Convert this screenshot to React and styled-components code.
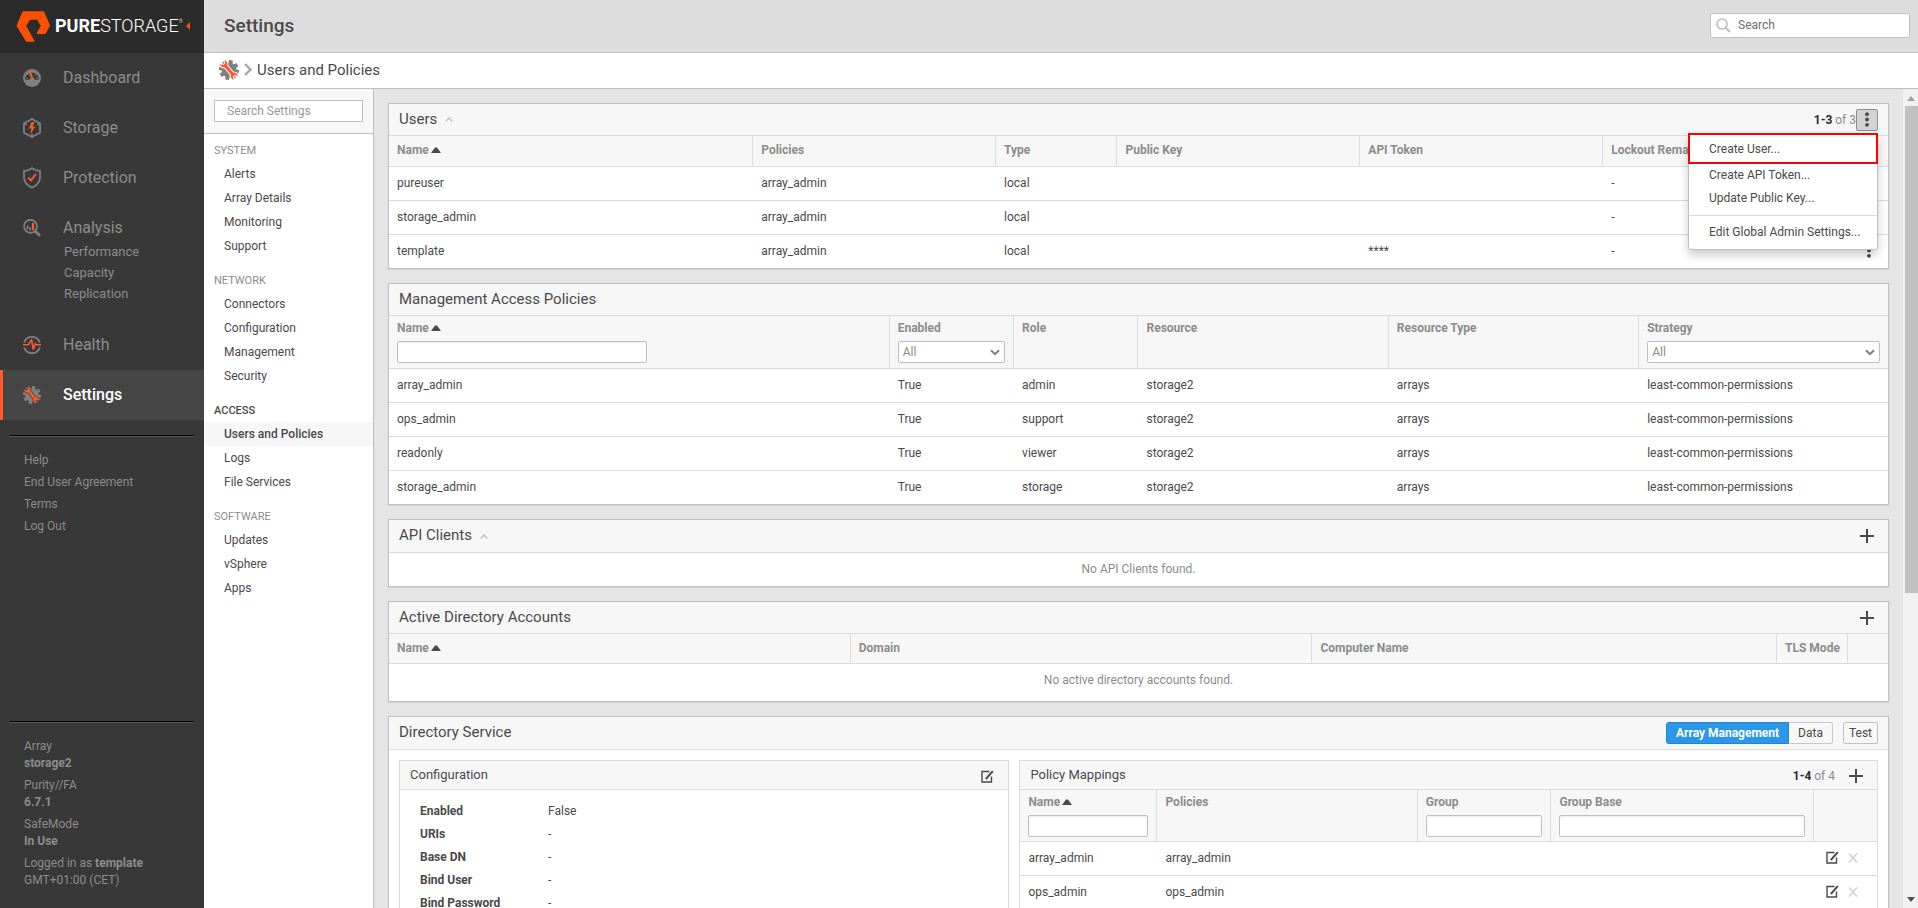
import React, { useState } from "react";
import styled, { createGlobalStyle } from "styled-components";

const GlobalStyle = createGlobalStyle`
* { box-sizing: border-box; }
body {
  margin: 0;
  font-family: Roboto, "Liberation Sans", sans-serif;
  font-size: 12px;
  line-height: 16px;
  color: #4a4a4a;
  background: #e5e5e5;
}
button, input, select { font: inherit; color: inherit; }
a { color: inherit; text-decoration: none; }
h1, h2, h3, ul, dl, dd, p { margin: 0; padding: 0; font-weight: 400; }
ul { list-style: none; }
`;

const Page = styled.div`
display: flex;
height: 100vh;
overflow: hidden;
`;

/* left menu */
const Sidebar = styled.aside`
display: flex;
flex-direction: column;
flex: 0 0 204px;
background: #383838;
color: #8c8c8c;
`;
const LogoBar = styled.div`
display: flex;
align-items: center;
height: 53px;
padding: 0 14px 2px 16px;
background: #2b2b2b;
color: #fff;
`;
const LogoText = styled.a`
flex: 1;
display: flex;
align-items: flex-start;
margin-left: 4px;
font-size: 18px;
font-weight: 300;
line-height: 22px;
strong { font-weight: 700; }
sup { font-size: 5px; line-height: 12px; }
`;
const CollapseButton = styled.button`
display: flex;
padding: 0;
border: 0;
background: none;
`;
const MainLink = styled.a`
display: flex;
align-items: center;
height: 50px;
padding-left: ${props => (props.$active ? "20px" : "23px")};
gap: 22px;
border-left: ${props => (props.$active ? "3px solid #ff5a28" : "0")};
background: ${props => (props.$active ? "#454545" : "none")};
color: ${props => (props.$active ? "#fff" : "inherit")};
font-weight: ${props => (props.$active ? 500 : 400)};
font-size: 16px;
`;
const SubLinks = styled.ul`
padding: 0 0 16px 64px;
margin-top: -12px;
font-size: 13px;
line-height: 21px;
`;
const Rule = styled.hr`
width: 184px;
height: 2px;
margin: ${props => (props.$bottom ? "auto" : "15px")} 10px 0;
border: 0;
border-top: 1px solid #000;
background: #565656;
`;
const HelpLinks = styled.ul`
padding: 12px 24px;
line-height: 22px;
`;
const ArrayInfo = styled.dl`
padding: 15px 24px 14px;
line-height: 17px;
div { margin-bottom: 5px; }
dd, strong { font-weight: 700; }
dd.plain { font-weight: 400; }
`;

/* right hand side */
const Content = styled.div`
display: flex;
flex-direction: column;
flex: 1;
min-width: 0;
`;
const TopBar = styled.header`
display: flex;
align-items: center;
justify-content: space-between;
flex: 0 0 53px;
padding: 0 8px 2px 20px;
border-bottom: 1px solid #c0c0c0;
background: #ddd;
h1 { margin-top: 2px; font-size: 19px; line-height: 24px; font-weight: 500; }
`;
const SearchBox = styled.label`
display: flex;
align-items: center;
gap: 7px;
width: 200px;
height: 25px;
padding: 0 5px;
border: 1px solid #c0c0c0;
border-radius: 2px;
background: #fff;
input {
  flex: 1;
  min-width: 0;
  padding: 0;
  border: 0;
  outline: 0;
}
input::placeholder { color: #6e6e6e; opacity: 1; }
`;
const Breadcrumb = styled.nav`
display: flex;
align-items: center;
flex: 0 0 36px;
padding: 0 15px 2px;
gap: 5px;
border-bottom: 1px solid #c0c0c0;
background: #fff;
h2 { font-size: 15px; line-height: 20px; }
`;
const Body = styled.div`
display: flex;
flex: 1;
min-height: 0;
`;

const SettingsNav = styled.nav`
flex: 0 0 170px;
border-right: 1px solid #c0c0c0;
background: #fff;
`;
const NavSearch = styled.div`
height: 45px;
padding: 11px 10px;
border-bottom: 1px solid #c0c0c0;
background: #f7f7f7;
input {
  display: block;
  width: 149px;
  height: 22px;
  padding: 0 12px;
  border: 1px solid #c0c0c0;
  outline: 0;
}
input::placeholder { color: #999; opacity: 1; }
`;
const NavGroup = styled.section`
padding-top: 5px;
margin-bottom: 6px;
h3 {
  padding-left: 10px;
  font-size: 11px;
  line-height: 23px;
  color: ${props => (props.$active ? "#4a4a4a" : "#8c8c8c")};
  font-weight: ${props => (props.$active ? 500 : 400)};
}
`;
const NavLink = styled.a`
display: block;
padding-left: 20px;
line-height: 24px;
background: ${props => (props.$active ? "#f7f7f7" : "none")};
font-weight: ${props => (props.$active ? 500 : 400)};
`;

const Main = styled.main`
display: flex;
flex-direction: column;
gap: 14px;
flex: 1;
min-width: 0;
padding: 14px 14px 0 14px;
overflow: hidden;
`;
const Panel = styled.section`
flex: none;
border: 1px solid #c0c0c0;
box-shadow: 0 1px 1px #d4d4d4;
background: #fff;
`;
const PanelHead = styled.div`
position: relative;
display: flex;
align-items: center;
height: ${props => (props.$tall ? "33px" : "32px")};
padding: 0 10px;
border-bottom: 1px solid #dcdcdc;
background: #f7f7f7;
h2 { font-size: 15px; line-height: 20px; margin: 0 8px 2px 0; }
`;
const Spacer = styled.div`
flex: 1;
`;
const Gap = styled.div`
width: 10px;
`;
const Count = styled.span`
color: #8c8c8c;
strong { color: #2b2b2b; }
`;
const IconButton = styled.button`
display: flex;
align-items: center;
justify-content: center;
width: 22px;
height: 22px;
padding: 0;
border: 1px solid ${props => (props.$open ? "#8c8c8c" : "transparent")};
border-radius: 2px;
background: ${props => (props.$open ? "#d3d3d3" : "none")};
`;
const Empty = styled.p`
height: ${props => (props.$tall ? "37px" : "33px")};
line-height: 33px;
text-align: center;
color: #8c8c8c;
`;

const Table = styled.table`
width: 100%;
table-layout: fixed;
border-collapse: separate;
border-spacing: 0;
th {
  height: ${props => props.$head || 31}px;
  padding: ${props => (props.$head > 40 ? "4px 8px 0" : "0 8px 2px")};
  border-right: 1px solid #dcdcdc;
  border-bottom: 1px solid #dcdcdc;
  background: #f7f7f7;
  color: #8c8c8c;
  text-align: left;
  vertical-align: ${props => (props.$head > 40 ? "top" : "middle")};
  font-weight: 700;
  white-space: nowrap;
}
th:last-child { border-right: 0; }
td {
  height: 34px;
  padding: 0 8px 2px;
  border-bottom: 1px solid #dcdcdc;
}
tbody tr:last-child td { height: 33px; border-bottom: 0; }
`;
const RowActions = styled.div`
display: flex;
justify-content: flex-end;
padding-right: ${props => (props.$inset ? "5px" : "0")};
`;
const FilterInput = styled.input`
display: block;
width: 100%;
max-width: 250px;
height: 22px;
margin-top: 5px;
padding: 0 5px;
border: 1px solid #c0c0c0;
border-radius: 2px;
box-shadow: inset 0 1px 1px #eee;
background: #fff;
`;
const SelectWrap = styled.div`
position: relative;
margin-top: 5px;
select {
  display: block;
  width: 100%;
  height: 22px;
  padding: 0 4px;
  border: 1px solid #c0c0c0;
  border-radius: 2px;
  appearance: none;
  background: #fff;
  color: #8c8c8c;
  font-weight: 400;
}
svg {
  position: absolute;
  right: 5px;
  top: 8px;
  pointer-events: none;
}
`;
const SortLabel = styled.span`
display: inline-flex;
align-items: center;
gap: 2px;
`;

const Menu = styled.div`
position: absolute;
z-index: 2;
top: 29px;
right: 10px;
width: 190px;
padding-bottom: 5px;
border: 1px solid #c0c0c0;
border-radius: 3px;
background: #fff;
box-shadow: 0 5px 10px rgba(0, 0, 0, 0.2);
hr {
  margin: 5px 0;
  border: 0;
  border-top: 1px solid #dcdcdc;
}
`;
const MenuItem = styled.button`
display: block;
width: 100%;
padding: 0 0 0 20px;
border: 0;
background: none;
line-height: 23px;
text-align: left;
white-space: nowrap;
`;
/* outlined first entry, drawn over the menu border */
const MarkedItem = styled(MenuItem)`
width: auto;
min-width: 190px;
margin: -1px -1px 0;
padding: 2px 0 0 19px;
border: 2px solid #f00;
line-height: 25px;
`;

const TabButton = styled.button`
height: 22px;
padding: 0 9px;
border: 1px solid ${props => (props.$active ? "#1f86d1" : "#c8c8c8")};
border-left-width: ${props => (props.$second ? 0 : "1px")};
border-radius: ${props => (props.$second ? "0 3px 3px 0" : "3px 0 0 3px")};
background: ${props => (props.$active ? "#2c97e8" : "#f7f7f7")};
color: ${props => (props.$active ? "#fff" : "#4a4a4a")};
font-weight: ${props => (props.$active ? 700 : 400)};
line-height: 18px;
`;
const TestButton = styled.button`
height: 22px;
margin-left: 10px;
padding: 0 5px;
border: 1px solid #c0c0c0;
border-radius: 2px;
background: #f7f7f7;
line-height: 18px;
`;
const Cards = styled.div`
display: grid;
grid-template-columns: 610fr 858fr;
gap: 10px;
align-items: start;
padding: 10px;
`;
const Card = styled.section`
border: 1px solid #dcdcdc;
min-width: 0;
`;
const CardHead = styled.div`
display: flex;
align-items: center;
height: 29px;
padding: 2px 10px 0;
border-bottom: 1px solid #dcdcdc;
background: #f7f7f7;
h3 { margin-bottom: 2px; font-size: 13px; line-height: 18px; }
`;
const ConfigList = styled.dl`
display: grid;
grid-template-columns: 128px 1fr;
padding: 10px 20px;
line-height: 23px;
dt { font-weight: 700; }
`;

const ScrollTrack = styled.div`
display: flex;
flex-direction: column;
justify-content: space-between;
flex: 0 0 15px;
padding: 7px 0 6px 2px;
background: #f1f1f1;
svg { margin-left: 2px; }
`;
const ScrollSpace = styled.div`
flex: 1;
padding: 5px 0;
`;
const ScrollThumb = styled.div`
height: 62%;
background: #c1c1c1;
`;

/* icons */
const GearIcon = ({ size = 18, bg }) => (
  <svg width={size} height={size} viewBox="0 0 20 20" aria-hidden="true">
    <g fill="#808080">
      <circle cx="10" cy="10" r="7.4" />
      {[0, 45, 90, 135, 180, 225, 270, 315].map(a => (
        <rect key={a} x="8" y="0" width="4" height="4" transform={`rotate(${a + 12} 10 10)`} />
      ))}
    </g>
    <path
      transform="translate(10 10) rotate(50)"
      d="M-10.500-3Q-7-4.600-4.600-1.500H4.600Q7-4.600 10.500-3L7.600-1.200V1.200L10.500 3Q7 4.600 4.600 1.500H-4.600Q-7 4.600-10.500 3L-7.600 1.200V-1.200Z"
      fill="#ff5a28"
      stroke={bg}
      strokeWidth="2"
      paintOrder="stroke"
    />
  </svg>
);

const DashboardIcon = () => (
  <svg width="18" height="18" viewBox="0 0 18 18" aria-hidden="true">
    <circle cx="9" cy="9" r="9" fill="#808080" />
    <path d="M2 10.500A7 7 0 1 1 16 10.500L12 11A3.200 3.200 0 0 0 6 11Z" fill="#383838" />
    <path d="M3 9l2 .5M4.500 5l1.500 1.500M9 2.600v1.800M13.500 5L12 6.500M15 9l-2 .5" stroke="#808080" strokeWidth="1" />
    <path d="M5.600 2.800L7.600 2.400 10.800 10 8.600 10.800Z" fill="#ff5a28" />
  </svg>
);

const StorageIcon = () => (
  <svg width="18" height="20" viewBox="0 0 18 20" fill="none" aria-hidden="true">
    <path d="M9 1L17 5.200V14.800L9 19 1 14.800V5.200Z" stroke="#808080" strokeWidth="1.700" />
    <path d="M1 5.200L4 6.800M17 5.200L14 6.800M9 19V15.400" stroke="#808080" strokeWidth="1.500" />
    <path d="M8.400 4L6 10.600H8.400L7.500 16 12.200 8.800H9.600L11.600 4Z" fill="#ff5a28" />
  </svg>
);

const ProtectionIcon = () => (
  <svg width="18" height="22" viewBox="0 0 18 22" fill="none" aria-hidden="true">
    <path d="M9 1.200C7 2.900 4 3.800 1 3.800V10.500C1 15 4.500 18.500 9 20.700 13.500 18.500 17 15 17 10.500V3.800C14 3.800 11 2.900 9 1.200Z" stroke="#808080" strokeWidth="1.700" />
    <path d="M5.200 10.800L8 13.400 13 7" stroke="#ff5a28" strokeWidth="1.900" />
  </svg>
);

const AnalysisIcon = () => (
  <svg width="18" height="18" viewBox="0 0 18 18" fill="none" aria-hidden="true">
    <circle cx="7.500" cy="7.300" r="6.500" stroke="#808080" strokeWidth="1.700" />
    <path d="M12 12L17 16.800" stroke="#808080" strokeWidth="2.800" />
    <path d="M4.500 6.500V10.500M7 8V11.200" stroke="#808080" strokeWidth="1.600" />
    <path d="M10 3.800V11" stroke="#ff5a28" strokeWidth="2.200" />
  </svg>
);

const HealthIcon = () => (
  <svg width="18" height="18" viewBox="0 0 18 18" fill="none" aria-hidden="true">
    <path d="M1.200 6.500A8.200 8.200 0 0 1 16.800 6.500M1.200 11.500A8.200 8.200 0 0 0 16.800 11.500" stroke="#808080" strokeWidth="1.900" />
    <path d="M0 8.800H5.600L6.800 6 8.600 4 10.300 13.600 12.200 7.800 13.200 8.800H18" stroke="#ff5a28" strokeWidth="1.600" />
  </svg>
);

const LogoIcon = () => (
  <svg width="35" height="32" viewBox="16 10 35 32" aria-hidden="true">
    <path
      d="M23 12H43.500L49.300 25.500 45 33.200H37.500L41.500 26 37.500 19H29.500L25.500 26 33.800 41H26.500L17.300 26Z"
      fill="#ff5000"
      stroke="#ff5000"
      strokeWidth="1.400"
      strokeLinejoin="round"
    />
  </svg>
);

const Plus = () => (
  <svg width="14" height="14" viewBox="0 0 14 14" aria-hidden="true">
    <path d="M7 0V14M0 7H14" stroke="#4a4a4a" strokeWidth="2" />
  </svg>
);

const Dots = () => (
  <svg width="4" height="15" viewBox="0 0 4 15" fill="#4a4a4a" aria-hidden="true">
    <circle cx="2" cy="2.200" r="1.900" />
    <circle cx="2" cy="7.500" r="1.900" />
    <circle cx="2" cy="12.800" r="1.900" />
  </svg>
);

const Edit = () => (
  <svg width="13" height="13" viewBox="0 0 13 13" fill="none" stroke="#4a4a4a" aria-hidden="true">
    <path d="M8.500 1.500H1V12H10.500V6.500" strokeWidth="1.400" />
    <path d="M4.800 9L11.800 1.200" strokeWidth="1.900" />
  </svg>
);

const Cross = () => (
  <svg width="10" height="10" viewBox="0 0 10 10" aria-hidden="true">
    <path d="M1 .5L9 9.500M9 .5L1 9.500" stroke="#d0d0d0" strokeWidth="1.400" />
  </svg>
);

const Caret = () => (
  <svg width="8" height="5" viewBox="0 0 8 5" fill="none" aria-hidden="true">
    <path d="M.7 4.500L4 1 7.300 4.500" stroke="#c0c0c0" strokeWidth="1.300" />
  </svg>
);

const SortUp = () => (
  <svg width="10" height="6" viewBox="0 0 10 6" aria-hidden="true">
    <path d="M0 6L4 .5H6L10 6Z" fill="#4a4a4a" />
  </svg>
);

const SelectArrow = () => (
  <svg width="10" height="7" viewBox="0 0 10 7" fill="none" aria-hidden="true">
    <path d="M1 1.200L5 5.200 9 1.200" stroke="#808080" strokeWidth="2" />
  </svg>
);

const ScrollArrow = ({ down }) => (
  <svg width="8" height="5" viewBox="0 0 8 5" aria-hidden="true">
    <path d={down ? "M0 0H8L4 5Z" : "M0 5H8L4 0Z"} fill={down ? "#505050" : "#a3a3a3"} />
  </svg>
);

const mainLinks = [
  { name: "Dashboard", icon: <DashboardIcon /> },
  { name: "Storage", icon: <StorageIcon /> },
  { name: "Protection", icon: <ProtectionIcon /> },
  { name: "Analysis", icon: <AnalysisIcon />, sub: ["Performance", "Capacity", "Replication"] },
  { name: "Health", icon: <HealthIcon /> },
  { name: "Settings", icon: <GearIcon bg="#454545" />, active: true },
];

const navGroups = [
  { title: "SYSTEM", items: ["Alerts", "Array Details", "Monitoring", "Support"] },
  { title: "NETWORK", items: ["Connectors", "Configuration", "Management", "Security"] },
  { title: "ACCESS", items: ["Users and Policies", "Logs", "File Services"] },
  { title: "SOFTWARE", items: ["Updates", "vSphere", "Apps"] },
];
const currentPage = "Users and Policies";

const users = [
  { name: "pureuser", token: "" },
  { name: "storage_admin", token: "" },
  { name: "template", token: "****", menu: true },
];

const policies = [
  ["array_admin", "admin"],
  ["ops_admin", "support"],
  ["readonly", "viewer"],
  ["storage_admin", "storage"],
];

const mappings = ["array_admin", "ops_admin"];

const config = [
  ["Enabled", "False"],
  ["URIs", "-"],
  ["Base DN", "-"],
  ["Bind User", "-"],
  ["Bind Password", "-"],
];

const Cols = ({ widths }) => (
  <colgroup>
    {widths.map((w, i) => <col key={i} width={w + "%"} />)}
  </colgroup>
);

const LeftMenu = () => (
  <Sidebar>
    <LogoBar>
      <LogoIcon />
      <LogoText href="#"><strong>PURE</strong>STORAGE<sup>®</sup></LogoText>
      <CollapseButton aria-label="Collapse menu">
        <svg width="4" height="8" viewBox="0 0 4 8"><path d="M4 0V8L0 4Z" fill="#ff5000" /></svg>
      </CollapseButton>
    </LogoBar>
    <nav>
      {mainLinks.map(link => (
        <React.Fragment key={link.name}>
          <MainLink href="#" $active={link.active}>{link.icon}{link.name}</MainLink>
          {link.sub && (
            <SubLinks>
              {link.sub.map(s => <li key={s}><a href="#">{s}</a></li>)}
            </SubLinks>
          )}
        </React.Fragment>
      ))}
    </nav>
    <Rule />
    <HelpLinks>
      {["Help", "End User Agreement", "Terms", "Log Out"].map(t => (
        <li key={t}><a href="#">{t}</a></li>
      ))}
    </HelpLinks>
    <Rule $bottom />
    <ArrayInfo>
      <div><dt>Array</dt><dd>storage2</dd></div>
      <div><dt>Purity//FA</dt><dd>6.7.1</dd></div>
      <div><dt>SafeMode</dt><dd>In Use</dd></div>
      <div><dt>Logged in as <strong>template</strong></dt><dd className="plain">GMT+01:00 (CET)</dd></div>
    </ArrayInfo>
  </Sidebar>
);

const UsersPanel = () => {
  const [open, setOpen] = useState(true);
  return (
    <Panel>
      <PanelHead>
        <h2>Users</h2>
        <Caret />
        <Spacer />
        <Count><strong>1-3</strong> of 3</Count>
        <IconButton $open={open} aria-label="User actions" onClick={() => setOpen(!open)}><Dots /></IconButton>
        {open && (
          <Menu>
            <MarkedItem>Create User...</MarkedItem>
            <MenuItem>Create API Token...</MenuItem>
            <MenuItem>Update Public Key...</MenuItem>
            <hr />
            <MenuItem>Edit Global Admin Settings...</MenuItem>
          </Menu>
        )}
      </PanelHead>
      <Table>
        <Cols widths={[24.3, 16.2, 8.1, 16.2, 16.2, 16.2, 2.8]} />
        <thead>
          <tr>
            <th><SortLabel>Name <SortUp /></SortLabel></th>
            <th>Policies</th>
            <th>Type</th>
            <th>Public Key</th>
            <th>API Token</th>
            <th>Lockout Remaining</th>
            <th></th>
          </tr>
        </thead>
        <tbody>
          {users.map(user => (
            <tr key={user.name}>
              <td>{user.name}</td>
              <td>array_admin</td>
              <td>local</td>
              <td></td>
              <td>{user.token}</td>
              <td>-</td>
              <td>
                {user.menu && <RowActions><IconButton aria-label="Row actions"><Dots /></IconButton></RowActions>}
              </td>
            </tr>
          ))}
        </tbody>
      </Table>
    </Panel>
  );
};

const FilterSelect = ({ id }) => (
  <SelectWrap>
    <select id={id}><option>All</option></select>
    <SelectArrow />
  </SelectWrap>
);

const PoliciesPanel = () => (
  <Panel>
    <PanelHead><h2>Management Access Policies</h2></PanelHead>
    <Table $head={53}>
      <Cols widths={[33.4, 8.3, 8.3, 16.7, 16.7, 16.6]} />
      <thead>
        <tr>
          <th><label htmlFor="policy-name"><SortLabel>Name <SortUp /></SortLabel></label><FilterInput id="policy-name" /></th>
          <th><label htmlFor="policy-enabled">Enabled</label><FilterSelect id="policy-enabled" /></th>
          <th>Role</th>
          <th>Resource</th>
          <th>Resource Type</th>
          <th><label htmlFor="policy-strategy">Strategy</label><FilterSelect id="policy-strategy" /></th>
        </tr>
      </thead>
      <tbody>
        {policies.map(([name, role]) => (
          <tr key={name}>
            <td>{name}</td>
            <td>True</td>
            <td>{role}</td>
            <td>storage2</td>
            <td>arrays</td>
            <td>least-common-permissions</td>
          </tr>
        ))}
      </tbody>
    </Table>
  </Panel>
);

const DirectoryPanel = () => (
  <Panel>
    <PanelHead $tall>
      <h2>Directory Service</h2>
      <Spacer />
      <TabButton $active>Array Management</TabButton>
      <TabButton $second>Data</TabButton>
      <TestButton>Test</TestButton>
    </PanelHead>
    <Cards>
      <Card>
        <CardHead>
          <h3>Configuration</h3>
          <Spacer />
          <IconButton aria-label="Edit configuration"><Edit /></IconButton>
        </CardHead>
        <ConfigList>
          {config.map(([label, value]) => (
            <React.Fragment key={label}><dt>{label}</dt><dd>{value}</dd></React.Fragment>
          ))}
        </ConfigList>
      </Card>
      <Card>
        <CardHead>
          <h3>Policy Mappings</h3>
          <Spacer />
          <Count><strong>1-4</strong> of 4</Count>
          <Gap />
          <IconButton aria-label="Add mapping"><Plus /></IconButton>
        </CardHead>
        <Table $head={52}>
          <Cols widths={[16, 30.4, 15.6, 30.6, 7.4]} />
          <thead>
            <tr>
              <th><label htmlFor="map-name"><SortLabel>Name <SortUp /></SortLabel></label><FilterInput id="map-name" /></th>
              <th>Policies</th>
              <th><label htmlFor="map-group">Group</label><FilterInput id="map-group" /></th>
              <th><label htmlFor="map-base">Group Base</label><FilterInput id="map-base" /></th>
              <th></th>
            </tr>
          </thead>
          <tbody>
            {mappings.map(name => (
              <tr key={name}>
                <td>{name}</td>
                <td>{name}</td>
                <td></td>
                <td></td>
                <td>
                  <RowActions $inset>
                    <IconButton aria-label={"Edit " + name}><Edit /></IconButton>
                    <IconButton aria-label={"Delete " + name}><Cross /></IconButton>
                  </RowActions>
                </td>
              </tr>
            ))}
          </tbody>
        </Table>
      </Card>
    </Cards>
  </Panel>
);

const App = () => (
  <Page>
    <GlobalStyle />
    <LeftMenu />
    <Content>
      <TopBar>
        <h1>Settings</h1>
        <SearchBox>
          <svg width="15" height="15" viewBox="0 0 15 15" fill="none" stroke="#c0c0c0" aria-hidden="true">
            <circle cx="6" cy="6" r="5" strokeWidth="1.700" />
            <path d="M9.500 9.500L14 14" strokeWidth="2.200" />
          </svg>
          <input placeholder="Search" aria-label="Search" />
        </SearchBox>
      </TopBar>
      <Breadcrumb>
        <GearIcon size={20} bg="#fff" />
        <svg width="8" height="13" viewBox="0 0 8 13" fill="none" aria-hidden="true">
          <path d="M1 1L6.500 6.500 1 12" stroke="#a8a8a8" strokeWidth="2.400" />
        </svg>
        <h2>Users and Policies</h2>
      </Breadcrumb>
      <Body>
        <SettingsNav>
          <NavSearch><input placeholder="Search Settings" aria-label="Search Settings" /></NavSearch>
          {navGroups.map(group => (
            <NavGroup key={group.title} $active={group.items.includes(currentPage)}>
              <h3>{group.title}</h3>
              {group.items.map(item => (
                <NavLink key={item} href="#" $active={item === currentPage}>{item}</NavLink>
              ))}
            </NavGroup>
          ))}
        </SettingsNav>
        <Main>
          <UsersPanel />
          <PoliciesPanel />
          <Panel>
            <PanelHead $tall>
              <h2>API Clients</h2>
              <Caret />
              <Spacer />
              <IconButton aria-label="Add API client"><Plus /></IconButton>
            </PanelHead>
            <Empty>No API Clients found.</Empty>
          </Panel>
          <Panel>
            <PanelHead>
              <h2>Active Directory Accounts</h2>
              <Spacer />
              <IconButton aria-label="Add account"><Plus /></IconButton>
            </PanelHead>
            <Table $head={30}>
              <Cols widths={[30.8, 30.8, 31, 4.7, 2.7]} />
              <thead>
                <tr>
                  <th><SortLabel>Name <SortUp /></SortLabel></th>
                  <th>Domain</th>
                  <th>Computer Name</th>
                  <th>TLS Mode</th>
                  <th></th>
                </tr>
              </thead>
            </Table>
            <Empty $tall>No active directory accounts found.</Empty>
          </Panel>
          <DirectoryPanel />
        </Main>
        <ScrollTrack>
          <ScrollArrow />
          <ScrollSpace><ScrollThumb /></ScrollSpace>
          <ScrollArrow down />
        </ScrollTrack>
      </Body>
    </Content>
  </Page>
);

export default App;
